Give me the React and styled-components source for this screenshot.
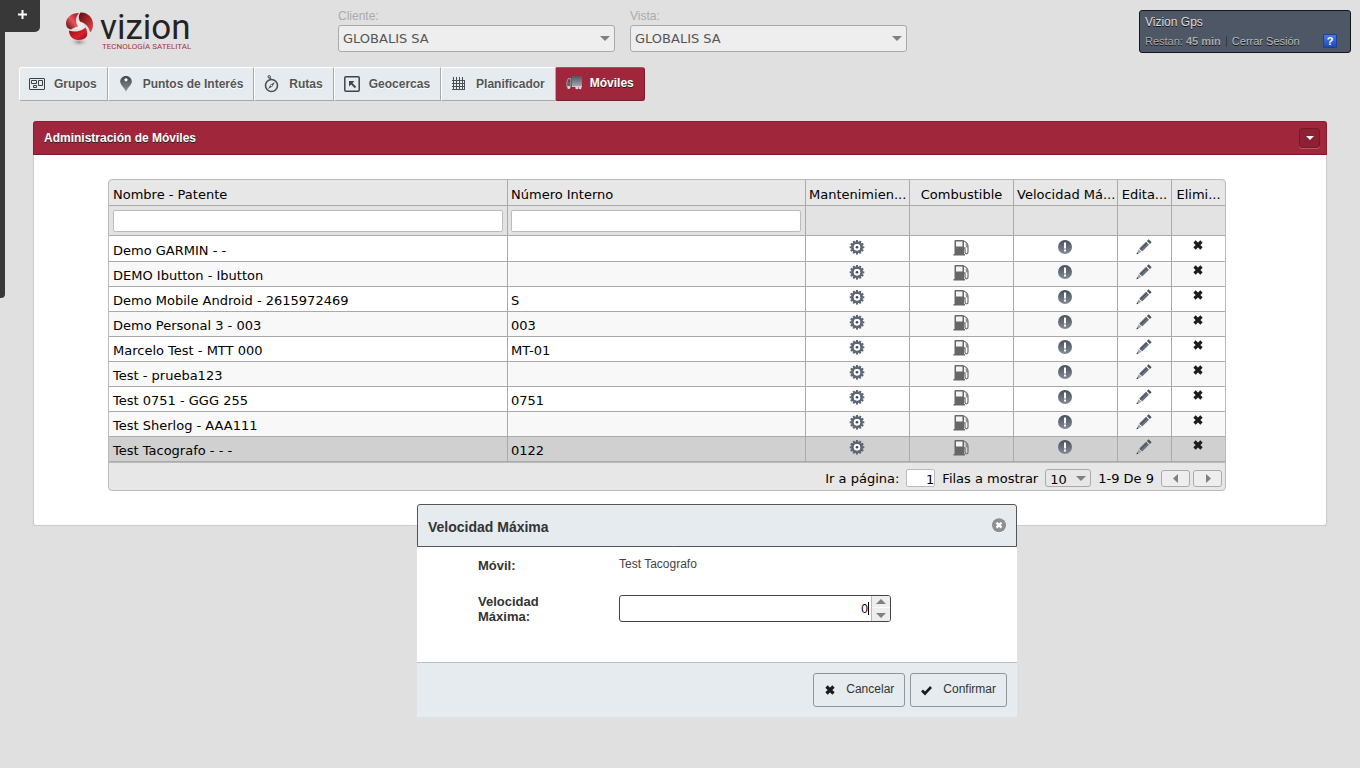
import React from "react";
import styled, { createGlobalStyle, css } from "styled-components";

const GlobalStyle = createGlobalStyle`
  * {
    box-sizing: border-box;
  }
  body {
    margin: 0;
    background: #e0e0e0;
    font-family: "Liberation Sans", Arial, sans-serif;
    font-size: 12px;
    color: #333;
  }
  button, input, select {
    font-family: inherit;
    margin: 0;
  }
`;

const verdana = `"DejaVu Sans", Verdana, sans-serif`;

const moviles = [
  { nombre: "Demo GARMIN - -", interno: "" },
  { nombre: "DEMO Ibutton - Ibutton", interno: "" },
  { nombre: "Demo Mobile Android - 2615972469", interno: "S" },
  { nombre: "Demo Personal 3 - 003", interno: "003" },
  { nombre: "Marcelo Test - MTT 000", interno: "MT-01" },
  { nombre: "Test - prueba123", interno: "" },
  { nombre: "Test 0751 - GGG 255", interno: "0751" },
  { nombre: "Test Sherlog - AAA111", interno: "" },
  { nombre: "Test Tacografo - - -", interno: "0122" },
];

/* ---------- icons ---------- */

const GruposIcon = () => (
  <svg width="18" height="16" viewBox="0 0 18 16" fill="none" stroke="#3a3f48">
    <rect x="1.5" y="2.5" width="15" height="11" rx="0.5" />
    <path d="M3.5 4.5h5v3h-5zM10.500 4.500h4v5h-4zM5.500 9.500h3v2h-3z" />
  </svg>
);

const PinIcon = () => (
  <svg width="18" height="18" viewBox="0 0 18 18">
    <defs>
      <linearGradient id="pin" x1="0" y1="0" x2="0" y2="1">
        <stop offset="0" stopColor="#3f4650" />
        <stop offset="1" stopColor="#8a929e" />
      </linearGradient>
    </defs>
    <path
      d="M9 1c-3.500 0-5.800 2.500-5.800 5.600 0 3.300 3.800 5.800 5.800 9.900 2-4.100 5.800-6.600 5.800-9.900 0-3.100-2.300-5.600-5.800-5.600z"
      fill="url(#pin)"
    />
    <circle cx="9" cy="4.800" r="1.600" fill="#fff" />
  </svg>
);

const RutasIcon = () => (
  <svg width="18" height="18" viewBox="0 0 18 18" fill="none" stroke="#4a4f58">
    <circle cx="8.500" cy="10.500" r="6" strokeWidth="1.600" />
    <circle cx="6.200" cy="1.800" r="1.200" stroke="#3a3f48" />
    <path d="M6.800 3L8 4.500" strokeWidth="1.400" />
    <path d="M5 14L7.600 9.600 12 7 9.400 11.400z" fill="#4a4f58" stroke="none" />
    <circle cx="8.500" cy="10.500" r="0.800" fill="#fff" stroke="none" />
  </svg>
);

const GeocercasIcon = () => (
  <svg width="18" height="18" viewBox="0 0 18 18" fill="none" stroke="#3f454f">
    <rect x="1.800" y="1.800" width="14.400" height="14.400" rx="1" strokeWidth="1.500" />
    <path d="M7 7L12.500 12.500" strokeWidth="1.800" />
    <path d="M6 11.500V6h5.500z" fill="#3f454f" stroke="none" />
  </svg>
);

const PlanificadorIcon = () => (
  <svg width="18" height="18" viewBox="0 0 18 18" fill="none" stroke="#4a4f57">
    <path d="M2 5.500h13M2 8.500h13M2 11.500h13M2 14.500h13M3.500 2v13M6.500 2v13M9.500 2v13M12.500 2v13M14.500 5v10" />
  </svg>
);

const MovilesIcon = () => (
  <svg width="18" height="18" viewBox="0 0 18 18">
    <defs>
      <linearGradient id="truck" x1="0" y1="0" x2="0" y2="1">
        <stop offset="0" stopColor="#4d5561" />
        <stop offset="1" stopColor="#9aa2ad" />
      </linearGradient>
    </defs>
    <path d="M7 2h10v9.500H7z" fill="url(#truck)" />
    <path d="M7 11.500h10v1.500H7z" fill="#c5cad0" />
    <path d="M1.800 12.500V8L3.200 4.500h2.600v8z" fill="#5c6470" stroke="#a7adb6" strokeWidth="0.800" />
    <path d="M2.800 8l.9-2.300h1.400V8z" fill="#9f263b" />
    <circle cx="3.800" cy="13.500" r="1.500" fill="#d7dbe0" />
    <circle cx="11.800" cy="13.800" r="1.500" fill="#d7dbe0" />
    <circle cx="15" cy="13.800" r="1.500" fill="#d7dbe0" />
  </svg>
);

const teeth = [0, 30, 60, 90, 120, 150, 180, 210, 240, 270, 300, 330];

const GearIcon = () => (
  <svg width="18" height="18" viewBox="0 0 18 18">
    {teeth.map((deg) => (
      <rect
        key={deg}
        x="8"
        y="2"
        width="2"
        height="2"
        fill="#5d6572"
        transform={`rotate(${deg} 9 9.300)`}
      />
    ))}
    <circle cx="9" cy="9.300" r="4.600" fill="none" stroke="#5d6675" strokeWidth="2.800" />
    <circle cx="9" cy="9.300" r="3.200" fill="#fff" />
    <circle cx="9" cy="9.300" r="1.300" fill="#3f4753" />
  </svg>
);

const FuelIcon = () => (
  <svg width="18" height="18" viewBox="0 0 18 18">
    <path d="M2.500 3q0-1 1-1h7.500q1 0 1 1v13h1v1.500h-11.500v-1.500h1z" fill="#666" />
    <path d="M4 3.500h6.500v5H4z" fill="#f4f4f4" />
    <path
      d="M12 10h1v4q0 1.800 1.500 1.800t1.500-1.800V8.500q0-3.500-4-5.500"
      fill="none"
      stroke="#777"
      strokeWidth="1.300"
    />
    <path d="M13.500 5.500l2.500 2v2.500l-2-1z" fill="#888" />
  </svg>
);

const AlertIcon = () => (
  <svg width="18" height="18" viewBox="0 0 18 18">
    <defs>
      <linearGradient id="alert" x1="0" y1="0" x2="0" y2="1">
        <stop offset="0" stopColor="#47505c" />
        <stop offset="1" stopColor="#848c98" />
      </linearGradient>
    </defs>
    <circle cx="9" cy="9" r="7" fill="url(#alert)" />
    <path d="M8 4.500h2v6H8zM8 11.500h2v2H8z" fill="#fff" />
  </svg>
);

const PencilIcon = () => (
  <svg width="18" height="18" viewBox="0 0 18 18">
    <path d="M4.200 10.500L11 3.800 14 6.800 7.200 13.500z" fill="#68717f" />
    <path d="M5.200 11.500L12 4.800" stroke="#3f4753" strokeWidth="1" />
    <path d="M11.900 2.900l1.700-1.600 3 3L14.900 6z" fill="#4c5460" />
    <path d="M3.600 11.300l2.800 2.800-4.800 2z" fill="#9ba2ac" />
    <path d="M2.300 14.300l1.200 1.200-2.200.8z" fill="#2b3038" />
  </svg>
);

const CrossIcon = () => (
  <svg width="18" height="18" viewBox="0 0 18 18">
    <path d="M5.500 3.500L12.500 10.500M12.500 3.500L5.500 10.500" stroke="#1c1c1c" strokeWidth="3.200" />
  </svg>
);

const CheckIcon = () => (
  <svg width="18" height="18" viewBox="0 0 18 18">
    <path d="M4 7.500l3 3 6-6.500" fill="none" stroke="#1c1c1c" strokeWidth="2.600" />
  </svg>
);

const CloseIcon = () => (
  <svg width="16" height="16" viewBox="0 0 16 16">
    <circle cx="8" cy="8" r="7" fill="#fff" />
    <circle cx="8" cy="7.200" r="7" fill="#8f8f8f" />
    <path d="M5.500 4.700l5 5M10.500 4.700l-5 5" stroke="#fff" strokeWidth="2.400" />
  </svg>
);

const arrows = {
  down: "M0 0h10L5 5z",
  up: "M0 5h10L5 0z",
  left: "M7 -2v9L2 2.500z",
  right: "M3 -2v9L8 2.500z",
};

const Arrow = ({ to = "down", color = "#808080", size = 10 }) => (
  <svg width={size} height={size / 2} viewBox="0 0 10 5" overflow="visible">
    <path d={arrows[to]} fill={color} />
  </svg>
);

const Logo = () => (
  <svg width="130" height="50" viewBox="0 0 130 50" overflow="visible">
    <defs>
      <linearGradient id="red1" x1="1" y1="0" x2="0" y2="1">
        <stop offset="0" stopColor="#a50f19" />
        <stop offset="0.500" stopColor="#e8545a" />
        <stop offset="1" stopColor="#4d070c" />
      </linearGradient>
      <linearGradient id="red2" x1="0" y1="0" x2="1" y2="1">
        <stop offset="0" stopColor="#7c0a12" />
        <stop offset="0.600" stopColor="#d9222d" />
        <stop offset="1" stopColor="#8c0d16" />
      </linearGradient>
      <linearGradient id="red3" x1="0" y1="0" x2="1" y2="1">
        <stop offset="0" stopColor="#5e0a10" />
        <stop offset="1" stopColor="#f04444" />
      </linearGradient>
      <radialGradient id="ballShadow">
        <stop offset="0" stopColor="#a08a8a" />
        <stop offset="1" stopColor="#e0e0e0" stopOpacity="0" />
      </radialGradient>
    </defs>
    <ellipse cx="14" cy="33" rx="10" ry="5" fill="url(#ballShadow)" />
    <path d="M12 11L20 15 17 20 8 20z" fill="#efe9e9" />
    <path d="M14 4C6 4 1 9 1 14.500 1 18 3 20 6 20.500 8 19 11 18 13 17.500 10 13 10.500 8 14 4z" fill="url(#red1)" />
    <path d="M15.500 3.500C23 3 28 9 28 15c0 4-1 7-3 8.500C24.500 18 20 14 15 12.500 13 9 13.500 6 15.500 3.500z" fill="url(#red3)" />
    <path d="M4 21.500C10 24 17 22 20.500 18.500 22 21 22.500 24 22 27 20 30 17 31 13 31 8 31 4 27 4 21.500z" fill="url(#red2)" />
    <LogoName x="35" y="30">
      vizion
    </LogoName>
    <LogoTag x="37" y="40">
      TECNOLOGÍA SATELITAL
    </LogoTag>
  </svg>
);

/* ---------- app ---------- */

function App() {
  const [velocidad, setVelocidad] = React.useState("0");
  const [pagina, setPagina] = React.useState("1");

  return (
    <>
      <GlobalStyle />
      <SideBar>
        <SideToggle type="button" aria-label="+">
          <svg width="9" height="9" viewBox="0 0 9 9">
            <path d="M3.500 0h2v3.500H9v2H5.500V9h-2V5.500H0v-2h3.500z" fill="#fff" />
          </svg>
        </SideToggle>
      </SideBar>

      <Header>
        <LogoLink href="#">
          <Logo />
        </LogoLink>
        <Filters>
          <Field>
            <FieldLabel htmlFor="cliente">Cliente:</FieldLabel>
            <SelectWrap>
              <Select id="cliente">
                <option>GLOBALIS SA</option>
              </Select>
              <SelectArrow>
                <Arrow />
              </SelectArrow>
            </SelectWrap>
          </Field>
          <Field>
            <FieldLabel htmlFor="vista">Vista:</FieldLabel>
            <SelectWrap>
              <Select id="vista">
                <option>GLOBALIS SA</option>
              </Select>
              <SelectArrow>
                <Arrow />
              </SelectArrow>
            </SelectWrap>
          </Field>
        </Filters>
        <UserBox>
          <UserName>Vizion Gps</UserName>
          <UserRow>
            <span>
              Restan: <b>45 min</b>
            </span>
            <Divider />
            <UserLink href="#">Cerrar Sesión</UserLink>
            <Help type="button">?</Help>
          </UserRow>
        </UserBox>
      </Header>

      <Nav>
        <Tab href="#">
          <GruposIcon />
          Grupos
        </Tab>
        <Tab href="#">
          <PinIcon />
          Puntos de Interés
        </Tab>
        <Tab href="#">
          <RutasIcon />
          Rutas
        </Tab>
        <Tab href="#">
          <GeocercasIcon />
          Geocercas
        </Tab>
        <Tab href="#">
          <PlanificadorIcon />
          Planificador
        </Tab>
        <Tab href="#" $active>
          <MovilesIcon />
          Móviles
        </Tab>
      </Nav>

      <Panel>
        <PanelHeader>
          <PanelTitle>Administración de Móviles</PanelTitle>
          <PanelToggle type="button" aria-label="Administración de Móviles">
            <Arrow color="#fff" size={8} />
          </PanelToggle>
        </PanelHeader>
        <PanelBody>
          <Grid>
            <Table>
              <colgroup>
                <col />
                <Col $w={298} />
                <Col $w={104} />
                <Col $w={104} />
                <Col $w={104} />
                <Col $w={54} />
                <Col $w={53} />
              </colgroup>
              <thead>
                <tr>
                  <Th>Nombre - Patente</Th>
                  <Th>Número Interno</Th>
                  <Th $center>Mantenimien...</Th>
                  <Th $center>Combustible</Th>
                  <Th $center>Velocidad Má...</Th>
                  <Th $center>Edita...</Th>
                  <Th $center>Elimi...</Th>
                </tr>
                <tr>
                  <FilterCell>
                    <FilterInput type="text" aria-label="Nombre - Patente" />
                  </FilterCell>
                  <FilterCell>
                    <FilterInput type="text" aria-label="Número Interno" />
                  </FilterCell>
                  <FilterCell />
                  <FilterCell />
                  <FilterCell />
                  <FilterCell />
                  <FilterCell />
                </tr>
              </thead>
              <tbody>
                {moviles.map((movil, index) => (
                  <Row key={movil.nombre} $selected={index === moviles.length - 1}>
                    <Td>{movil.nombre}</Td>
                    <Td>{movil.interno}</Td>
                    <IconTd>
                      <IconBtn type="button" aria-label="Mantenimien...">
                        <GearIcon />
                      </IconBtn>
                    </IconTd>
                    <IconTd>
                      <IconBtn type="button" aria-label="Combustible">
                        <FuelIcon />
                      </IconBtn>
                    </IconTd>
                    <IconTd>
                      <IconBtn type="button" aria-label="Velocidad Máxima">
                        <AlertIcon />
                      </IconBtn>
                    </IconTd>
                    <IconTd>
                      <IconBtn type="button" aria-label="Edita...">
                        <PencilIcon />
                      </IconBtn>
                    </IconTd>
                    <IconTd>
                      <IconBtn type="button" aria-label="Elimi...">
                        <CrossIcon />
                      </IconBtn>
                    </IconTd>
                  </Row>
                ))}
              </tbody>
            </Table>
            <Pager>
              <label htmlFor="pagina">Ir a página:</label>
              <PageInput
                id="pagina"
                type="text"
                value={pagina}
                onChange={(e) => setPagina(e.target.value)}
              />
              <label htmlFor="filas">Filas a mostrar</label>
              <SelectWrap>
                <RowsSelect id="filas">
                  <option>10</option>
                </RowsSelect>
                <SelectArrow>
                  <Arrow />
                </SelectArrow>
              </SelectWrap>
              <span>1-9 De 9</span>
              <PageBtns>
                <PageBtn type="button" aria-label="Ir a página: -">
                  <Arrow to="left" />
                </PageBtn>
                <PageBtn type="button" aria-label="Ir a página: +">
                  <Arrow to="right" />
                </PageBtn>
              </PageBtns>
            </Pager>
          </Grid>
        </PanelBody>
      </Panel>

      <Modal role="dialog" aria-labelledby="modal-title">
        <ModalHeader>
          <ModalTitle id="modal-title">Velocidad Máxima</ModalTitle>
          <CloseBtn type="button" aria-label="Cancelar">
            <CloseIcon />
          </CloseBtn>
        </ModalHeader>
        <ModalBody>
          <ModalLabel as="span">Móvil:</ModalLabel>
          <ModalValue>Test Tacografo</ModalValue>
          <ModalLabel htmlFor="velocidad">Velocidad Máxima:</ModalLabel>
          <Spinner>
            <SpinnerInput
              id="velocidad"
              type="text"
              value={velocidad}
              onChange={(e) => setVelocidad(e.target.value)}
            />
            <Caret />
            <SpinnerBtns>
              <SpinnerBtn
                type="button"
                aria-label="+"
                onClick={() => setVelocidad(String(Number(velocidad) + 1))}
              >
                <Arrow to="up" />
              </SpinnerBtn>
              <SpinnerBtn
                type="button"
                aria-label="-"
                onClick={() => setVelocidad(String(Number(velocidad) - 1))}
              >
                <Arrow />
              </SpinnerBtn>
            </SpinnerBtns>
          </Spinner>
        </ModalBody>
        <ModalFooter>
          <ModalBtn type="button">
            <BtnIcon>
              <CrossIcon />
            </BtnIcon>
            Cancelar
          </ModalBtn>
          <ModalBtn type="button">
            <BtnIcon>
              <CheckIcon />
            </BtnIcon>
            Confirmar
          </ModalBtn>
        </ModalFooter>
      </Modal>
    </>
  );
}

const LogoName = styled.text`
  font-family: Roboto, sans-serif;
  font-size: 35px;
  fill: #262223;
`;
const LogoTag = styled.text`
  font-family: Roboto, sans-serif;
  font-size: 8px;
  fill: #a8323c;
`;

const SideBar = styled.aside`
  position: fixed;
  top: 0;
  left: 0;
  width: 5px;
  height: 298px;
  background: #383838;
  border-radius: 0 0 4px 0;
`;
const SideToggle = styled.button`
  display: flex;
  align-items: center;
  justify-content: center;
  width: 40px;
  height: 32px;
  padding: 0 0 4px 5px;
  border: none;
  border-radius: 0 0 5px 0;
  background: #383838;
  cursor: pointer;
`;

const Header = styled.header`
  display: flex;
  align-items: flex-start;
  padding: 9px 9px 0 65px;
  min-height: 67px;
`;
const LogoLink = styled.a`
  flex: 0 0 273px;
  line-height: 0;
`;
const Filters = styled.div`
  display: flex;
  gap: 15px;
`;
const Field = styled.div`
  display: flex;
  flex-direction: column;
  gap: 2px;
  width: 277px;
`;
const FieldLabel = styled.label`
  line-height: 14px;
  color: #aaa;
`;
const SelectWrap = styled.div`
  position: relative;
  display: flex;
`;
const Select = styled.select`
  appearance: none;
  width: 100%;
  height: 27px;
  padding: 0 20px 0 4px;
  border: 1px solid #aaa;
  border-radius: 3px;
  background: #eee;
  color: #555;
  font-family: ${verdana};
  font-size: 13px;
`;
const SelectArrow = styled.span`
  position: absolute;
  top: 0;
  right: 5px;
  bottom: 0;
  display: flex;
  align-items: center;
  pointer-events: none;
`;

const UserBox = styled.div`
  margin: 1px 0 0 auto;
  width: 212px;
  height: 43px;
  padding: 4px 5px;
  border: 1px solid #14181d;
  border-radius: 3px;
  background: #4d5766;
  text-shadow: 0 1px 0 #111;
`;
const UserName = styled.div`
  line-height: 15px;
  color: #ddd;
`;
const UserRow = styled.div`
  display: flex;
  align-items: center;
  height: 14px;
  margin-top: 4px;
  font-size: 11px;
  color: #aaa;
`;
const Divider = styled.span`
  width: 1px;
  height: 11px;
  margin: 0 5px;
  background: #333a44;
`;
const UserLink = styled.a`
  color: #bbb;
  text-decoration: none;
`;
const Help = styled.button`
  width: 14px;
  height: 14px;
  margin: 0 8px 0 auto;
  padding: 0;
  border: 1px solid #1c3f9c;
  border-radius: 1px;
  background: linear-gradient(#4a7be0, #1f4bb5);
  color: #fff;
  font-size: 11px;
  font-weight: bold;
  line-height: 12px;
  cursor: pointer;
`;

const Nav = styled.nav`
  display: flex;
  padding-left: 19px;
`;
const Tab = styled.a`
  display: flex;
  align-items: center;
  gap: 8px;
  height: 34px;
  padding: 0 10px 0 8px;
  border: 1px solid #fff;
  border-right-color: #aaa;
  border-bottom-color: #aaa;
  background: #e5ebef;
  color: #555;
  font-size: 12px;
  font-weight: bold;
  text-decoration: none;
  text-shadow: 0 1px 0 #fff;
  &:first-child {
    border-radius: 3px 0 0 3px;
  }
  ${(props) =>
    props.$active &&
    css`
      gap: 7px;
      padding-bottom: 2px;
      border-color: #b5485a #7d1c2d #7d1c2d #9f263b;
      border-radius: 0 3px 3px 0;
      background: #9f263b;
      color: #fff;
      text-shadow: 0 1px 0 #222;
    `}
`;

const Panel = styled.main`
  margin: 20px 33px 0;
  border-radius: 4px;
  background: #fff;
  box-shadow: 0 2px 2px rgba(0, 0, 0, 0.06);
`;
const PanelHeader = styled.div`
  display: flex;
  align-items: center;
  justify-content: space-between;
  height: 34px;
  padding: 0 6px 0 10px;
  border: 1px solid #8a1f32;
  border-bottom-color: #7d1c2d;
  border-radius: 3px 3px 0 0;
  background: #9f263b;
`;
const PanelTitle = styled.h1`
  margin: 0;
  font-size: 12px;
  color: #fff;
  text-shadow: 0 1px 0 #222;
`;
const PanelToggle = styled.button`
  display: flex;
  align-items: center;
  justify-content: center;
  width: 21px;
  height: 20px;
  padding: 0;
  border: 1px solid #741a2b;
  border-radius: 3px;
  background: #8e2034;
  box-shadow: 0 1px 0 #b5586a;
  cursor: pointer;
`;
const PanelBody = styled.div`
  padding: 24px 100px 34px 74px;
  border: 1px solid #ccc;
  border-top: none;
  border-radius: 0 0 3px 3px;
`;

const Grid = styled.div`
  overflow: hidden;
  border: 1px solid #bbb;
  border-radius: 4px;
  background: #e7e7e7;
  color: #000;
  font-family: ${verdana};
  font-size: 13px;
`;
const Table = styled.table`
  width: 100%;
  table-layout: fixed;
  border-collapse: separate;
  border-spacing: 0;
`;
const Col = styled.col`
  width: ${(props) => props.$w}px;
`;
const cell = css`
  border-right: 1px solid #aaa;
  border-bottom: 1px solid #aaa;
  white-space: nowrap;
  &:last-child {
    border-right: none;
  }
`;
const Th = styled.th`
  ${cell}
  height: 26px;
  padding: 5px 3px 0;
  font-weight: normal;
  line-height: 16px;
  text-align: ${(props) => (props.$center ? "center" : "left")};
  &:first-child {
    padding-left: 4px;
  }
`;
const FilterCell = styled.td`
  ${cell}
  height: 30px;
  padding: 0 4px 0 3px;
  background: #e3e3e3;
  &:first-child {
    padding-left: 4px;
  }
`;
const FilterInput = styled.input`
  display: block;
  width: 100%;
  height: 22px;
  padding: 0 4px;
  border: 1px solid #bbb;
  border-radius: 2px;
  background: #fff;
`;
const Td = styled.td`
  ${cell}
  padding: 3px 4px 0 3px;
  line-height: 16px;
  &:first-child {
    padding-left: 4px;
  }
`;
const IconTd = styled.td`
  ${cell}
  padding: 0 1px 0 0;
  vertical-align: top;
`;
const Row = styled.tr`
  height: 25px;
  background: #fff;
  &:first-child {
    height: 26px;
  }
  &:first-child ${Td} {
    padding-top: 4px;
  }
  &:first-child ${IconTd} {
    padding-top: 1px;
  }
  &:nth-child(even) {
    background: #f8f8f8;
  }
  ${(props) => props.$selected && "background: #d0d0d0;"}
`;
const IconBtn = styled.button`
  display: flex;
  align-items: center;
  justify-content: center;
  width: 100%;
  height: 20px;
  padding: 0;
  border: none;
  background: none;
  cursor: pointer;
`;

const Pager = styled.div`
  display: flex;
  align-items: center;
  justify-content: flex-end;
  gap: 7px;
  height: 28px;
  padding: 3px 3px 0;
  border-top: 1px solid #bbb;
`;
const PageInput = styled.input`
  width: 29px;
  height: 18px;
  padding: 2px 0 0;
  border: 1px solid #bbb;
  border-radius: 2px;
  background: #fff;
  font-family: ${verdana};
  font-size: 13px;
  text-align: right;
`;
const RowsSelect = styled(Select)`
  width: 46px;
  height: 18px;
  padding: 2px 16px 0 4px;
  background: #e7e7e7;
  color: #000;
`;
const PageBtns = styled.div`
  display: flex;
  gap: 3px;
`;
const PageBtn = styled.button`
  display: flex;
  align-items: center;
  justify-content: center;
  width: 29px;
  height: 17px;
  padding: 0;
  border: 1px solid #aaa;
  border-radius: 3px;
  background: #eee;
  cursor: pointer;
`;

const Modal = styled.section`
  position: fixed;
  top: 504px;
  left: 417px;
  width: 600px;
  border-radius: 3px;
  background: #fff;
`;
const ModalHeader = styled.div`
  display: flex;
  align-items: center;
  justify-content: space-between;
  height: 43px;
  padding: 0 9px 0 10px;
  border: 1px solid #555;
  border-radius: 3px 3px 0 0;
  background: #e5ebef;
`;
const ModalTitle = styled.h2`
  margin: 3px 0 0;
  font-size: 14px;
  color: #333;
`;
const CloseBtn = styled.button`
  display: flex;
  padding: 0;
  border: none;
  background: none;
  cursor: pointer;
`;
const ModalBody = styled.div`
  display: grid;
  grid-template-columns: 100px 272px;
  align-items: start;
  gap: 21px 41px;
  padding: 11px 61px 38px;
`;
const ModalLabel = styled.label`
  color: #333;
  font-size: 13px;
  font-weight: bold;
  line-height: 15px;
`;
const ModalValue = styled.span`
  color: #444;
  line-height: 12px;
`;
const Spinner = styled.div`
  position: relative;
  display: flex;
  height: 27px;
  margin-top: 1px;
  overflow: hidden;
  border: 1px solid #444;
  border-radius: 3px;
  background: #fff;
`;
const SpinnerInput = styled.input`
  flex: 1;
  min-width: 0;
  padding: 0 3px 0 0;
  border: none;
  outline: none;
  background: none;
  color: #000;
  font-size: 12px;
  text-align: right;
`;
const Caret = styled.span`
  position: absolute;
  top: 6px;
  right: 21px;
  width: 1px;
  height: 13px;
  background: #000;
`;
const SpinnerBtns = styled.div`
  display: flex;
  flex-direction: column;
  width: 19px;
  border-left: 1px solid #bbb;
`;
const SpinnerBtn = styled.button`
  display: flex;
  flex: 1;
  align-items: center;
  justify-content: center;
  padding: 0;
  border: none;
  background: #eee;
  cursor: pointer;
  & + & {
    border-top: 1px solid #fff;
    padding-top: 3px;
  }
`;
const ModalFooter = styled.div`
  display: flex;
  justify-content: flex-end;
  gap: 5px;
  padding: 10px;
  border-top: 1px solid #b5bfc5;
  border-radius: 0 0 3px 3px;
  background: #e5ebef;
`;
const ModalBtn = styled.button`
  display: flex;
  align-items: center;
  gap: 7px;
  height: 34px;
  padding: 0 10px 2px 7px;
  border: 1px solid #8d979d;
  border-radius: 3px;
  background: #e5ebef;
  color: #333;
  font-size: 12px;
  cursor: pointer;
`;
const BtnIcon = styled.span`
  display: flex;
  padding-top: 6px;
`;

export default App;
